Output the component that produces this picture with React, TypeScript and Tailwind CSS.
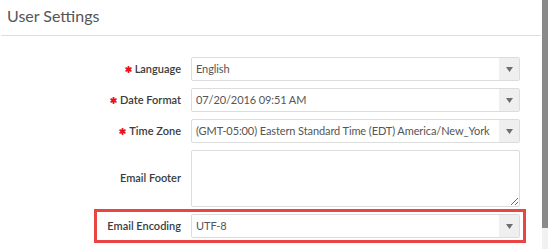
import React from "react";

const FONT = { fontFamily: "Lato, 'Open Sans', sans-serif" };

function Req() {
  return (
    <svg width="7" height="7" viewBox="0 0 8 8" className="mr-[3px] shrink-0">
      <g stroke="#e8141c" strokeWidth="2" strokeLinecap="round">
        <line x1="4" y1="0.8" x2="4" y2="7.2" />
        <line x1="1.2" y1="2.4" x2="6.8" y2="5.6" />
        <line x1="1.2" y1="5.6" x2="6.8" y2="2.4" />
      </g>
      <circle cx="4" cy="4" r="2.4" fill="#e8141c" />
    </svg>
  );
}

function Select({ value }: { value: string }) {
  return (
    <div className="flex h-[24px] w-[329px] items-stretch rounded-[2px] border border-[#dcdcdc] bg-white">
      <div className="flex min-w-0 flex-1 items-center whitespace-nowrap pl-[4px] text-[11px] tracking-[-0.1px] text-[#555]">{value}</div>
      <div className="flex w-[20px] shrink-0 items-center justify-center bg-[#efefef]">
        <svg width="7" height="5" viewBox="0 0 7 5">
          <path d="M0 0h7L3.5 5z" fill="#6e6e6e" />
        </svg>
      </div>
    </div>
  );
}

function Row({ label, required, children }: { label: string; required?: boolean; children: React.ReactNode }) {
  return (
    <div className="flex items-center">
      <div className="flex w-[191px] items-center justify-end pr-[10px] text-[11px] font-semibold text-[#3c3c3c]">
        {required && <Req />}
        <span>{label}</span>
      </div>
      {children}
    </div>
  );
}

export default function App() {
  return (
    <div className="flex h-[249px] w-[548px] overflow-hidden bg-white" style={FONT}>
      <div className="relative flex-1">
        <div className="mx-[1px] flex h-[36px] items-center border-b border-[#dedede] pb-[3px] pl-[6px] text-[16px] text-[#555]">
          User Settings
        </div>
        <div className="flex flex-col gap-[7px] pt-[21px]">
          <Row label="Language" required>
            <Select value="English" />
          </Row>
          <Row label="Date Format" required>
            <Select value="07/20/2016 09:51 AM" />
          </Row>
          <Row label="Time Zone" required>
            <Select value="(GMT-05:00) Eastern Standard Time (EDT) America/New_York" />
          </Row>
          <Row label="Email Footer">
            <textarea className="h-[57px] w-[329px] resize rounded-[2px] border border-[#dcdcdc] bg-white outline-none" />
          </Row>
          <Row label="Email Encoding">
            <Select value="UTF-8" />
          </Row>
        </div>
        <div className="pointer-events-none absolute left-[94px] top-[209px] h-[34px] w-[432px] border-[3px] border-[#e84545]" />
      </div>
      <div className="flex w-[6px] flex-col bg-[#f1f1f1]">
        <div className="h-[228px] bg-[#8a8a8a]" />
      </div>
    </div>
  );
}
